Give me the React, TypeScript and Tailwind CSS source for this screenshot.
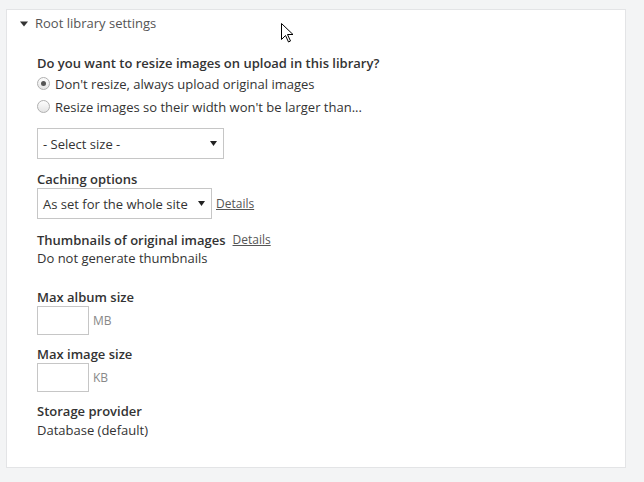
const font = { fontFamily: '"Open Sans", "Liberation Sans", sans-serif' };

function Radio({ checked, label }: { checked?: boolean; label: string }) {
  return (
    <label className="flex items-center h-[23px] text-[13px] text-[#333]">
      <span className="w-[13px] h-[13px] rounded-full border border-[#b0b0b0] bg-gradient-to-b from-[#fdfdfd] to-[#e4e4e4] flex items-center justify-center mr-[5px]">
        {checked && <span className="w-[5px] h-[5px] rounded-full bg-[#555]" />}
      </span>
      {label}
    </label>
  );
}

function Caret() {
  return (
    <svg width="7" height="7" viewBox="0 0 7 7" className="text-[#222]">
      <path d="M0 1h7L3.5 6z" fill="currentColor" />
    </svg>
  );
}

function Select({ text, width }: { text: string; width: string }) {
  return (
    <div
      className={`${width} h-[31px] border border-[#c6c6c6] bg-white flex items-center justify-between pl-[5px] pr-[6px] text-[13px] text-[#333]`}
    >
      <span>{text}</span>
      <Caret />
    </div>
  );
}

export default function App() {
  return (
    <div className="w-[644px] h-[482px] bg-[#f3f4f5] pt-[9px] pl-[6px] relative" style={font}>
      <div className="w-[620px] h-[459px] bg-white border border-[#e3e4e6] pl-[13px]">
        <div className="flex items-center h-[18px] mt-[5px] text-[13px] text-[#555]">
          <svg width="8" height="6" viewBox="0 0 8 6" className="mr-[7px]">
            <path d="M0 0.5h8L4 5.5z" fill="#333" />
          </svg>
          Root library settings
        </div>

        <div className="pl-[17px] text-[13px] text-[#333] leading-[18px]">
          <div className="mt-[21px] font-semibold">Do you want to resize images on upload in this library?</div>
          <Radio checked label="Don't resize, always upload original images" />
          <Radio label="Resize images so their width won't be larger than..." />

          <div className="mt-[10px]">
            <Select text="- Select size -" width="w-[187px]" />
          </div>

          <div className="mt-[11px] font-semibold">Caching options</div>
          <div className="flex items-center">
            <Select text="As set for the whole site" width="w-[175px]" />
            <a className="ml-[4px] underline text-[#555] text-[12px]">Details</a>
          </div>

          <div className="mt-[12px] flex items-center">
            <span className="font-semibold">Thumbnails of original images</span>
            <a className="ml-[7px] underline text-[#555] text-[12px]">Details</a>
          </div>
          <div>Do not generate thumbnails</div>

          <div className="mt-[21px] font-semibold">Max album size</div>
          <div className="flex items-center">
            <div className="w-[52px] h-[29px] border border-[#c6c6c6]" />
            <span className="ml-[4px] text-[12px] text-[#888]">MB</span>
          </div>

          <div className="mt-[10px] font-semibold">Max image size</div>
          <div className="flex items-center">
            <div className="w-[52px] h-[29px] border border-[#c6c6c6]" />
            <span className="ml-[4px] text-[12px] text-[#888]">KB</span>
          </div>

          <div className="mt-[10px] font-semibold">Storage provider</div>
          <div className="mt-[1px]">Database (default)</div>
        </div>
      </div>

      <svg
        width="13"
        height="20"
        viewBox="0 0 13 20"
        className="absolute left-[281px] top-[23px]"
      >
        <path
          d="M0.5 0.5v16l4-4 3 6.5 2-1-3-6.5h5.5z"
          fill="#fff"
          stroke="#000"
          strokeWidth="1"
          strokeLinejoin="round"
        />
      </svg>
    </div>
  );
}
